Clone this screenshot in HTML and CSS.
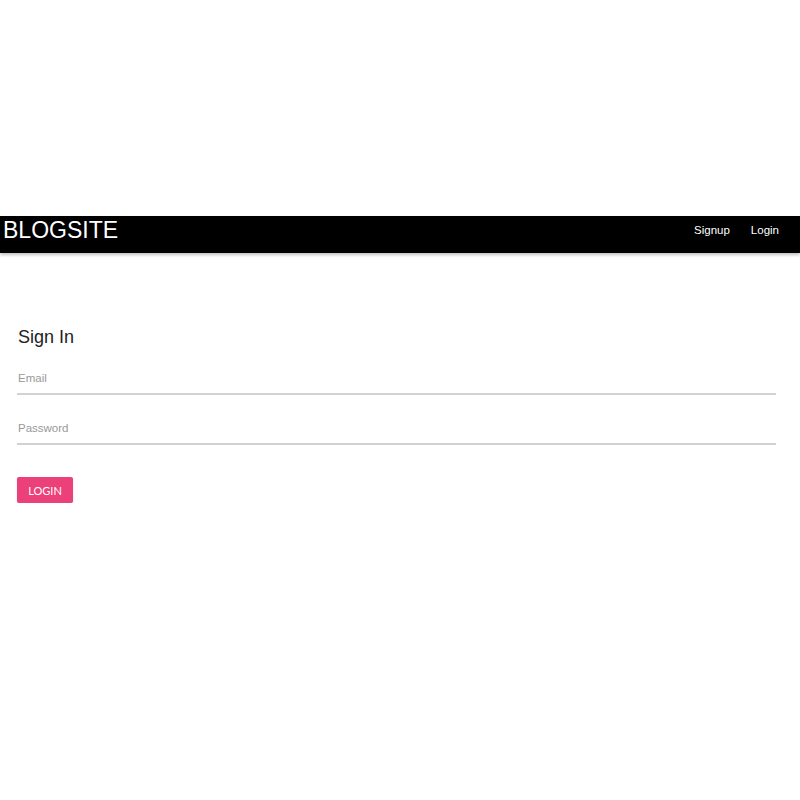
FILE: index.html
```html
<!DOCTYPE html>
<html>
<head>
<meta charset="utf-8">
<link rel="stylesheet" href="styles.css">
</head>
<body>
<div class="top-space"></div>
<nav class="navbar">
  <a class="brand" href="#">BLOGSITE</a>
  <div class="nav-links">
    <a href="#">Signup</a>
    <a href="#">Login</a>
  </div>
</nav>
<main class="content">
  <h2 class="title">Sign In</h2>
  <form class="form">
    <input class="field" type="email" placeholder="Email">
    <input class="field" type="password" placeholder="Password">
    <button class="btn" type="button">LOGIN</button>
  </form>
</main>
</body>
</html>
```
FILE: styles.css
```css
html, body {
  margin: 0;
  padding: 0;
  background: #fff;
  font-family: "Liberation Sans", Arial, sans-serif;
}
.top-space {
  height: 216px;
}
.navbar {
  height: 37px;
  box-sizing: border-box;
  background: #000;
  display: flex;
  align-items: flex-start;
  justify-content: space-between;
  padding: 0 21px 0 3px;
  box-shadow: 0 2px 3px rgba(0,0,0,0.25);
}
.brand {
  color: #fff;
  text-decoration: none;
  font-size: 23px;
  line-height: 28px;
}
.nav-links {
  display: flex;
  gap: 21px;
}
.nav-links a {
  color: #fff;
  text-decoration: none;
  font-size: 11.5px;
  line-height: 28px;
}
.content {
  padding: 73px 24px 0 17px;
}
.title {
  margin: 0;
  font-weight: normal;
  font-size: 18px;
  line-height: 22px;
  color: #222;
  padding-left: 1px;
}
.form {
  display: flex;
  flex-direction: column;
  align-items: flex-start;
  margin-top: 15px;
}
.field {
  width: 100%;
  box-sizing: border-box;
  border: none;
  border-bottom: 2px solid #d2d2d2;
  outline: none;
  height: 32px;
  padding: 0 1px 1px;
  margin-bottom: 18px;
  font-family: "Liberation Sans", Arial, sans-serif;
  font-size: 11.5px;
  color: #333;
  background: transparent;
}
.field::placeholder {
  color: #999;
}
.btn {
  margin-top: 14px;
  width: 56px;
  height: 26px;
  border: none;
  border-radius: 2px;
  background: #ec407a;
  color: #fff;
  font-family: Lato, "Open Sans", sans-serif;
  font-size: 11px;
  padding: 0;
  box-shadow: 0 1px 2px rgba(0,0,0,0.15);
}
```
